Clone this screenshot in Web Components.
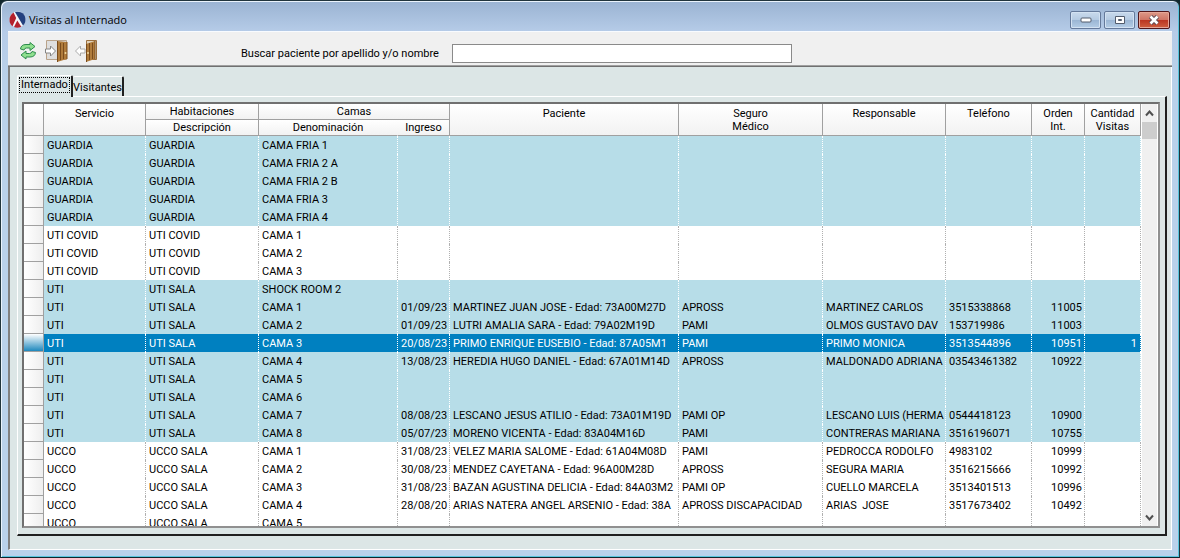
<!DOCTYPE html>
<html lang="es">
<head>
<meta charset="utf-8">
<title>Visitas al Internado</title>
<style>
html, body { margin: 0; height: 100%; }
body { background: #10262c; font: 11px/13px Roboto, "Liberation Sans", Arial, sans-serif; color: #000; overflow: hidden; }
</style>
</head>
<body>
<app-window caption="Visitas al Internado">
  <tool-strip slot="tools"></tool-strip>
  <tab-box><visit-grid></visit-grid></tab-box>
</app-window>
<script>
const define = (name, html, setup) => customElements.define(name, class extends HTMLElement {
  connectedCallback() {
    if (this.shadowRoot) return;
    const t = document.createElement('template');
    t.innerHTML = html;
    this.attachShadow({ mode: 'open' }).append(t.content.cloneNode(true));
    if (setup) setup(this, this.shadowRoot);
  }
});

define('app-window', `
<style>
:host { display: flex; flex-direction: column; box-sizing: border-box; height: 100vh; border: 1px solid #20343c; border-bottom-color: #10242c; border-radius: 7px 7px 0 0;
  background: linear-gradient(#9ab3d2, #b6cce8 31px, #b9d1ea 80px, #b9d1ea 100%); box-shadow: inset 1px 1px #eaf3fc, inset -1px -1px #58c4dc; padding: 0 7px 7px; }
header { display: flex; align-items: center; height: 30px; flex: none; gap: 3px; }
h1 { flex: 1; margin: 0; padding-top: 8px; font: 11px/16px "Open Sans", "Noto Sans", sans-serif; }
.logo { padding: 6px 0 0 1px; }
nav { display: flex; gap: 3px; padding: 7px 2px 0 0; }
button { box-sizing: border-box; width: 31px; height: 18px; padding: 0; border: 1px solid #64799a; border-radius: 2px; background: linear-gradient(#c9daec, #b4cae2 50%, #9ab5d3 50%, #b4cde6); box-shadow: inset 0 0 0 1px #d3e2f2; display: grid; place-items: center; }
button.close { width: 32px; border-color: #51161a; background: linear-gradient(#dd9988, #cf7363 50%, #b93420 50%, #cf6040); box-shadow: inset 0 0 0 1px #e6a697; }
main { flex: 1; min-height: 0; display: flex; flex-direction: column; border-top: 1px solid #f8fbff; background: #dce6e6; }
.panel { flex: 1; min-height: 0; display: flex; border: solid; border-width: 0 1px 1px 2px; border-color: #fff #fff #fff #808080; padding: 8px 4px 13px 7px; }
</style>
<header>
  <svg class="logo" width="17" height="17" viewBox="0 0 17 17" aria-hidden="true"><circle cx="8.500" cy="8.500" r="8" fill="#f4f6fa"/><path d="M4.500 1.500Q0.500 4 0.500 9q0 4 3 6.200L7.200 7z" fill="#b3202c"/><path d="M6 1q9.500-1.500 10.500 7 0 4.500-2.500 6.500z" fill="#23407f"/><path d="M8.300 9.500l4 6.200q-4 2-7.300.3z" fill="#b3202c"/></svg>
  <h1></h1>
  <nav>
    <button aria-label="Minimizar"><svg width="12" height="6"><rect x="1" y="1" width="10" height="4" rx="1" fill="#fff" stroke="#525c6c"/></svg></button>
    <button aria-label="Maximizar"><svg width="12" height="10"><path d="M1.500 1.500h9v7h-9z" fill="#fff" stroke="#525c6c"/><path d="M4.500 4.500h3v1h-3z" fill="#8faac8" stroke="#525c6c"/></svg></button>
    <button class="close" aria-label="Cerrar"><svg width="14" height="10" viewBox="0 0 14 10"><path d="M3.500 1.500l7 7M10.500 1.500l-7 7" stroke="#5a4a55" stroke-width="4.500"/><path d="M3.500 1.500l7 7M10.500 1.500l-7 7" stroke="#fff" stroke-width="2.600"/></svg></button>
  </nav>
</header>
<main><slot name="tools"></slot><div class="panel"><slot></slot></div></main>`,
(el, root) => { root.querySelector('h1').textContent = el.getAttribute('caption'); });

define('tool-strip', `
<style>
:host { display: flex; align-items: center; box-sizing: border-box; height: 35px; padding-top: 4px; flex: none; background: #f0f0f0; border-bottom: 1px solid #707070; box-shadow: inset 0 -1px #a0a0a0; }
nav { display: flex; align-items: center; gap: 6px; width: 233px; padding-left: 10px; box-sizing: border-box; }
button { border: 0; background: none; padding: 0; display: block; height: 24px; }
label { width: 211px; font: inherit; padding-top: 4px; }
input { width: 340px; height: 19px; box-sizing: border-box; border: 1px solid #8a8a8a; background: #fff; padding: 0 3px; font: inherit; outline: 0; margin-top: 4px; }
</style>
<nav>
  <button aria-label="Actualizar"><svg width="20" height="24" viewBox="0 0 20 24"><g fill="#8fe08f" stroke="#2e8b4d" stroke-linejoin="round"><path d="M2.500 10Q3 5.500 8 5.500h4V3.500l5 4-5 4V9H8.500Q6.500 9 6 11z"/><path d="M17.500 13.500Q17 18 12 18H8v2l-5-4 5-4v2.500h3.500q2 0 2.500-2z"/></g></svg></button>
  <button aria-label="Ingreso"><svg width="25" height="24" viewBox="0 0 25 24"><path d="M2.500 1.500h20v19h-20z" fill="#dedede" stroke="#b9a38a"/><path d="M13 2l10 1v17l-10 3z" fill="#b07c3c"/><path d="M13.500 2v21M16.500 4v17M19.500 4v16" stroke="#7a4c1c"/><path d="M23 3v17" stroke="#7a4c1c"/><circle cx="21.500" cy="14" r="1" fill="#f0d9a0"/><path d="M1.500 10h5V7l5 5-5 5v-3h-5z" fill="#fff" stroke="#858585"/></svg></button>
  <button aria-label="Egreso"><svg width="24" height="24" viewBox="0 0 24 24"><path d="M11.500 1.500h10v19h-10z" fill="#e0d2bb" stroke="#9a7040"/><path d="M11 5l9-3v18l-9 3z" fill="#b07c3c"/><path d="M11.500 5v18M14.500 4v17M17.500 4v16" stroke="#7a4c1c"/><path d="M20 2v18" stroke="#7a4c1c"/><circle cx="13" cy="14" r="1" fill="#f0d9a0"/><path d="M10 10H5.500V7l-5 5 5 5v-3H10z" fill="#fff" stroke="#aaa"/></svg></button>
</nav>
<label for="q">Buscar paciente por apellido y/o nombre</label><input id="q" type="text">`);

define('tab-box', `
<style>
:host { display: flex; flex-direction: column; flex: 1; min-width: 0; min-height: 0; }
nav { display: flex; align-items: flex-end; flex: none; height: 21px; }
button { font: inherit; color: #000; background: #dce6e6; box-sizing: border-box; width: 51px; height: 20px; padding: 2px 0 0; text-align: center; border: solid; border-width: 1px 2px 0 0; border-color: #fff #202020 #fff #fff; border-radius: 2px 2px 0 0; }
button[aria-selected=true] { width: 56px; border-left-width: 1px; height: 22px; margin-bottom: -1px; position: relative; padding: 0 2px 3px; }
button[aria-selected=true] span { display: block; outline: 1px dotted #000; line-height: 14px; }
.page { flex: 1; min-height: 0; display: flex; border: solid; border-width: 1px 2px 2px 1px; border-color: #fff #202020 #202020 #fff; padding: 5px 5px 6px 4px; }
</style>
<nav role="tablist"><button role="tab" aria-selected="true"><span>Internado</span></button><button role="tab" aria-selected="false">Visitantes</button></nav>
<div class="page"><slot></slot></div>`);

const visits = `GUARDIA|GUARDIA|CAMA FRIA 1
GUARDIA|GUARDIA|CAMA FRIA 2 A
GUARDIA|GUARDIA|CAMA FRIA 2 B
GUARDIA|GUARDIA|CAMA FRIA 3
GUARDIA|GUARDIA|CAMA FRIA 4
UTI COVID|UTI COVID|CAMA 1
UTI COVID|UTI COVID|CAMA 2
UTI COVID|UTI COVID|CAMA 3
UTI|UTI SALA|SHOCK ROOM 2
UTI|UTI SALA|CAMA 1|01/09/23|MARTINEZ JUAN JOSE - Edad: 73A00M27D|APROSS|MARTINEZ CARLOS|3515338868|11005
UTI|UTI SALA|CAMA 2|01/09/23|LUTRI AMALIA SARA - Edad: 79A02M19D|PAMI|OLMOS GUSTAVO DAV|153719986|11003
UTI|UTI SALA|CAMA 3|20/08/23|PRIMO ENRIQUE EUSEBIO - Edad: 87A05M1|PAMI|PRIMO MONICA|3513544896|10951|1
UTI|UTI SALA|CAMA 4|13/08/23|HEREDIA HUGO DANIEL - Edad: 67A01M14D|APROSS|MALDONADO ADRIANA|03543461382|10922
UTI|UTI SALA|CAMA 5
UTI|UTI SALA|CAMA 6
UTI|UTI SALA|CAMA 7|08/08/23|LESCANO JESUS ATILIO - Edad: 73A01M19D|PAMI OP|LESCANO LUIS (HERMA|0544418123|10900
UTI|UTI SALA|CAMA 8|05/07/23|MORENO VICENTA - Edad: 83A04M16D|PAMI|CONTRERAS MARIANA|3516196071|10755
UCCO|UCCO SALA|CAMA 1|31/08/23|VELEZ MARIA SALOME - Edad: 61A04M08D|PAMI|PEDROCCA RODOLFO|4983102|10999
UCCO|UCCO SALA|CAMA 2|30/08/23|MENDEZ CAYETANA - Edad: 96A00M28D|APROSS|SEGURA MARIA|3516215666|10992
UCCO|UCCO SALA|CAMA 3|31/08/23|BAZAN AGUSTINA DELICIA - Edad: 84A03M2|PAMI OP|CUELLO MARCELA|3513401513|10996
UCCO|UCCO SALA|CAMA 4|28/08/20|ARIAS NATERA ANGEL ARSENIO - Edad: 38A|APROSS DISCAPACIDAD|ARIAS  JOSE|3517673402|10492
UCCO|UCCO SALA|CAMA 5`.split('\n').map(r => r.split('|'));

define('visit-grid', `
<style>
:host { display: flex; flex: 1; min-width: 0; min-height: 0; background: #fff; border: 2px solid #808080; border-color: #707070 #909090 #909090 #707070; padding: 0 1px 0 0; }
.view { flex: 1; min-width: 0; overflow: hidden; }
table { width: 100%; table-layout: fixed; border-collapse: separate; border-spacing: 0; }
th, td { box-sizing: border-box; padding: 0; overflow: hidden; white-space: pre; font-weight: normal; }
thead th { height: 16px; border: solid #a0a0a0; border-width: 0 1px 1px 0; background: linear-gradient(#fff, #f2f2f2); vertical-align: top; padding-top: 2px; line-height: 12px; }
thead th[rowspan] { height: 32px; padding-top: 3px; line-height: 13px; }
thead th.open { border-right-color: transparent; }
tbody th { height: 18px; border: solid #a0a0a0; border-width: 0 1px 1px 0; background: linear-gradient(90deg, #fff, #eee); }
td { height: 18px; padding: 0 0 0 3px; border-right: 1px dotted #b0b0b0; }
td.n { text-align: right; padding: 0 2px 0 0; }
td:last-child { padding-right: 3px; }
tr.alt { background: #b7dde8; }
tr.alt td { border-right-color: #fff; }
tr.sel, tr.sel td { background: #0080c0; color: #fff; }
tr.sel th { background: linear-gradient(#fff, #1e88bd); }
.bar { flex: none; width: 15px; display: flex; flex-direction: column; background: #f0f0f0; margin-left: 1px; }
.bar button { border: 0; padding: 0; background: none; height: 18px; display: grid; place-items: center; }
.thumb { height: 17px; background: #cdcdcd; }
.gap { flex: 1; }
</style>
<div class="view"><table>
<colgroup><col style="width:20px"><col style="width:102px"><col style="width:113px"><col style="width:139px"><col style="width:52px"><col><col style="width:144px"><col style="width:123px"><col style="width:86px"><col style="width:53px"><col style="width:56px"></colgroup>
<thead>
<tr><th rowspan="2"></th><th rowspan="2">Servicio</th><th>Habitaciones</th><th colspan="2">Camas</th><th rowspan="2">Paciente</th><th rowspan="2">Seguro<br>Médico</th><th rowspan="2">Responsable</th><th rowspan="2">Teléfono</th><th rowspan="2">Orden<br>Int.</th><th rowspan="2">Cantidad<br>Visitas</th></tr>
<tr><th>Descripción</th><th class="open">Denominación</th><th>Ingreso</th></tr>
</thead><tbody></tbody></table></div>
<div class="bar"><button aria-label="Subir"><svg width="9" height="7"><path d="M1 5.500l3.500-4 3.500 4" fill="none" stroke="#505050" stroke-width="2"/></svg></button><div class="thumb"></div><div class="gap"></div><button aria-label="Bajar"><svg width="9" height="7"><path d="M1 1.500l3.500 4 3.500-4" fill="none" stroke="#505050" stroke-width="2"/></svg></button></div>`,
(el, root) => {
  const body = root.querySelector('tbody');
  for (const v of visits) {
    const tr = body.insertRow();
    if (v[0] === 'GUARDIA' || v[0] === 'UTI') tr.classList.add('alt');
    if (v[9]) tr.classList.add('sel');
    tr.append(document.createElement('th'));
    for (let i = 0; i < 10; i++) {
      const td = tr.insertCell();
      td.textContent = v[i] || '';
      if (i > 7) td.className = 'n';
    }
  }
});
</script>
</body>
</html>
